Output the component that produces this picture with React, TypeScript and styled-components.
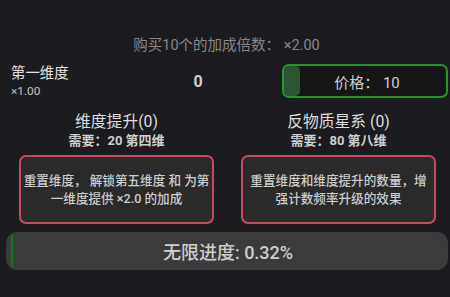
import React from "react";
import styled, { createGlobalStyle } from "styled-components";

const Global = createGlobalStyle`
  html, body { margin: 0; padding: 0; background: #1c1b20; }
  body { font-family: Roboto, "Noto Sans CJK SC", sans-serif; color: #d6d6d6; }
`;

const Page = styled.div`
  width: 450px;
  height: 297px;
  overflow: hidden;
  background: #1c1b20;
  padding-top: 36px;
  box-sizing: border-box;
`;

const Header = styled.div`
  text-align: center;
  font-size: 14.5px;
  line-height: 20px;
  color: #878787;
  padding-left: 3px;
`;

const Row = styled.div`
  display: grid;
  grid-template-columns: 150px 74px 1fr;
  align-items: center;
  margin-top: 8px;
  padding: 0 2px 0 11px;
  height: 34px;
`;

const Label = styled.div`
  display: flex;
  flex-direction: column;
  align-self: start;
`;

const LabelName = styled.div`
  font-size: 14.4px;
  line-height: 19px;
  font-weight: 400;
  color: #e2e2e2;
`;

const LabelMult = styled.div`
  font-size: 11.8px;
  line-height: 14px;
  margin-top: 1px;
  color: #c4c4c4;
`;

const Amount = styled.div`
  text-align: center;
  font-size: 16px;
  font-weight: 700;
  color: #d0d0d0;
`;

const BuyButton = styled.div`
  justify-self: end;
  width: 166px;
  height: 34px;
  box-sizing: border-box;
  border: 2px solid #1f9a28;
  border-radius: 7px;
  background: #151515;
  position: relative;
  display: flex;
  align-items: center;
  justify-content: center;
  font-size: 15px;
  color: #cfcfcf;
`;

const BuyFill = styled.div`
  position: absolute;
  left: 0;
  top: 0;
  bottom: 0;
  border-radius: 5px;
  background: #2c5535;
`;

const BuyText = styled.span`
  position: relative;
  padding-left: 4px;
`;

const Columns = styled.div`
  display: grid;
  grid-template-columns: 195px 195px;
  column-gap: 27px;
  padding-left: 19px;
  margin-top: 14px;
`;

const Column = styled.div`
  display: flex;
  flex-direction: column;
  align-items: center;
`;

const Title = styled.div`
  font-size: 15.8px;
  line-height: 20px;
  color: #dedede;
`;

const Requirement = styled.div`
  font-size: 13px;
  line-height: 18px;
  font-weight: 700;
  color: #cfcfcf;
`;

const ResetBox = styled.div`
  margin-top: 5px;
  width: 195px;
  height: 69px;
  box-sizing: border-box;
  border: 2px solid #c64a60;
  border-radius: 7px;
  background: #2a2a2a;
  display: flex;
  align-items: center;
  justify-content: center;
  text-align: center;
  padding: 0 2px;
  font-size: 12.6px;
  line-height: 18px;
  font-weight: 500;
  color: #cdcdcd;
`;

const InfinityBar = styled.div`
  margin: 8px 2px 0 6px;
  height: 38px;
  border-radius: 11px;
  background: #3b3b3b;
  position: relative;
  display: flex;
  align-items: center;
  justify-content: center;
  font-size: 18px;
  font-weight: 500;
  color: #cfcfcf;
`;

const InfinityFill = styled.div`
  position: absolute;
  left: 5px;
  top: 3px;
  bottom: 3px;
  min-width: 2px;
  background: #0f7a14;
  border-radius: 1px;
`;

const InfinityText = styled.span`
  position: relative;
  padding-left: 2px;
`;

export default function App() {
  const progress = 0.32;
  return (
    <>
      <Global />
      <Page>
        <Header>购买10个的加成倍数： ×2.00</Header>
        <Row>
          <Label>
            <LabelName>第一维度</LabelName>
            <LabelMult>×1.00</LabelMult>
          </Label>
          <Amount>0</Amount>
          <BuyButton>
            <BuyFill style={{ width: "16px" }} />
            <BuyText>价格： 10</BuyText>
          </BuyButton>
        </Row>
        <Columns>
          <Column>
            <Title>维度提升(0)</Title>
            <Requirement>需要：20 第四维</Requirement>
            <ResetBox>重置维度， 解锁第五维度 和 为第一维度提供 ×2.0 的加成</ResetBox>
          </Column>
          <Column>
            <Title>反物质星系 (0)</Title>
            <Requirement>需要：80 第八维</Requirement>
            <ResetBox>重置维度和维度提升的数量，增强计数频率升级的效果</ResetBox>
          </Column>
        </Columns>
        <InfinityBar>
          <InfinityFill style={{ width: `${progress}%` }} />
          <InfinityText>无限进度: 0.32%</InfinityText>
        </InfinityBar>
      </Page>
    </>
  );
}
